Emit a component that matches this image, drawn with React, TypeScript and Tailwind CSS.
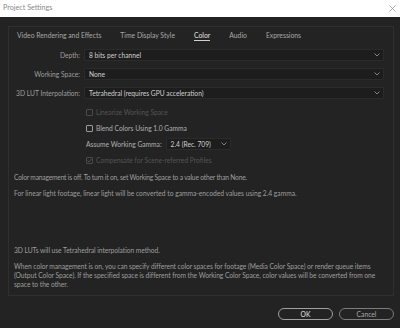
import React from 'react';

const Chevron = () => (
  <svg width="6" height="4" viewBox="0 0 6 4" className="shrink-0">
    <path d="M0.5 0.5 L3 3 L5.5 0.5" fill="none" stroke="#8c8c8c" strokeWidth="0.9" />
  </svg>
);

const Select: React.FC<{ value: string; className?: string }> = ({ value, className }) => (
  <div
    className={`h-[12px] flex items-center justify-between bg-[#1d1d1d] border border-[#2b2b2b] rounded-[1px] pl-[4px] pr-[3px] ${className ?? ''}`}
  >
    <span className="text-[#cfcfcf]">{value}</span>
    <Chevron />
  </div>
);

const Checkbox: React.FC<{ label: string; checked?: boolean; disabled?: boolean }> = ({ label, checked, disabled }) => (
  <div className="h-[16px] flex items-center gap-[3px]">
    <div
      className={`w-[7px] h-[7px] border rounded-[1px] flex items-center justify-center ${
        disabled ? 'border-[#4a4a4a]' : 'border-[#9a9a9a]'
      }`}
    >
      {checked && (
        <svg width="5" height="5" viewBox="0 0 5 5">
          <path d="M0.6 2.6 L2 4 L4.4 1" fill="none" stroke="#555" strokeWidth="1" />
        </svg>
      )}
    </div>
    <span className={disabled ? 'text-[#545454]' : 'text-[#b0b0b0]'}>{label}</span>
  </div>
);

const tabs = ['Video Rendering and Effects', 'Time Display Style', 'Color', 'Audio', 'Expressions'];

const App: React.FC = () => {
  return (
    <div className="w-[400px] h-[328px] bg-[#232323] flex flex-col font-['Lato',sans-serif] text-[6.7px] text-[#9e9e9e] overflow-hidden">
      {/* Title bar */}
      <div className="h-[17px] bg-white flex items-center justify-between pl-[3px] pr-[4px] shrink-0">
        <span className="text-[#8a8a8a] text-[7.2px]">Project Settings</span>
        <svg width="7" height="7" viewBox="0 0 7 7">
          <path d="M0.5 0.5 L6.5 6.5 M6.5 0.5 L0.5 6.5" stroke="#9a9a9a" strokeWidth="0.8" />
        </svg>
      </div>

      {/* Panel */}
      <div className="ml-[8px] mt-[9px] w-[386px] h-[270px] border border-[#2f2f2f] flex flex-col">
        <div className="flex h-[11px] mt-[3px] pl-[8px] gap-[19px] leading-[10px] text-[6.8px]">
          {tabs.map((t) => (
            <div
              key={t}
              className={t === 'Color' ? 'text-[#e0e0e0] border-b border-[#d0d0d0] h-[11px]' : 'text-[#a8a8a8]'}
            >
              {t}
            </div>
          ))}
        </div>

        <div className="flex flex-col gap-[7px] mt-[8px]">
          {[
            ['Depth:', '8 bits per channel'],
            ['Working Space:', 'None'],
            ['3D LUT Interpolation:', 'Tetrahedral (requires GPU acceleration)'],
          ].map(([label, value]) => (
            <div key={label} className="flex items-center">
              <span className="w-[71px] text-right shrink-0">{label}</span>
              <Select value={value} className="ml-[4px] mr-[9px] flex-1" />
            </div>
          ))}
        </div>

        <div className="flex flex-col mt-[5px] ml-[77px]">
          <Checkbox label="Linearize Working Space" disabled />
          <Checkbox label="Blend Colors Using 1.0 Gamma" />
          <div className="h-[16px] flex items-center gap-[4px]">
            <span className="text-[#b0b0b0]">Assume Working Gamma:</span>
            <Select value="2.4 (Rec. 709)" className="w-[65px] h-[11px]" />
          </div>
          <Checkbox label="Compensate for Scene-referred Profiles" checked disabled />
        </div>

        <div className="pl-[5px] pr-[8px] leading-[9px]">
          <p className="mt-[5px] tracking-[-0.2px]">
            Color management is off. To turn it on, set Working Space to a value other than None.
          </p>
          <p className="mt-[7px]">
            For linear light footage, linear light will be converted to gamma-encoded values using 2.4 gamma.
          </p>
        </div>

        <div className="mt-auto pl-[5px] pb-[6px] leading-[9px] whitespace-nowrap tracking-[-0.05px]">
          <p>3D LUTs will use Tetrahedral interpolation method.</p>
          <p className="mt-[7px]">
            When color management is on, you can specify different color spaces for footage (Media Color Space) or render
            queue items
            <br />
            (Output Color Space). If the specified space is different from the Working Color Space, color values will be
            converted from one
            <br />
            space to the other.
          </p>
        </div>
      </div>

      {/* Buttons */}
      <div className="ml-[8px] w-[386px] mt-[12px] flex justify-end gap-[6px]">
        <button className="w-[55px] h-[12px] rounded-full border border-[#a0a0a0] text-[#e4e4e4] flex items-center justify-center leading-none">
          OK
        </button>
        <button className="w-[55px] h-[12px] rounded-full border border-[#7c7c7c] text-[#a8a8a8] flex items-center justify-center leading-none">
          Cancel
        </button>
      </div>
    </div>
  );
};

export default App;
